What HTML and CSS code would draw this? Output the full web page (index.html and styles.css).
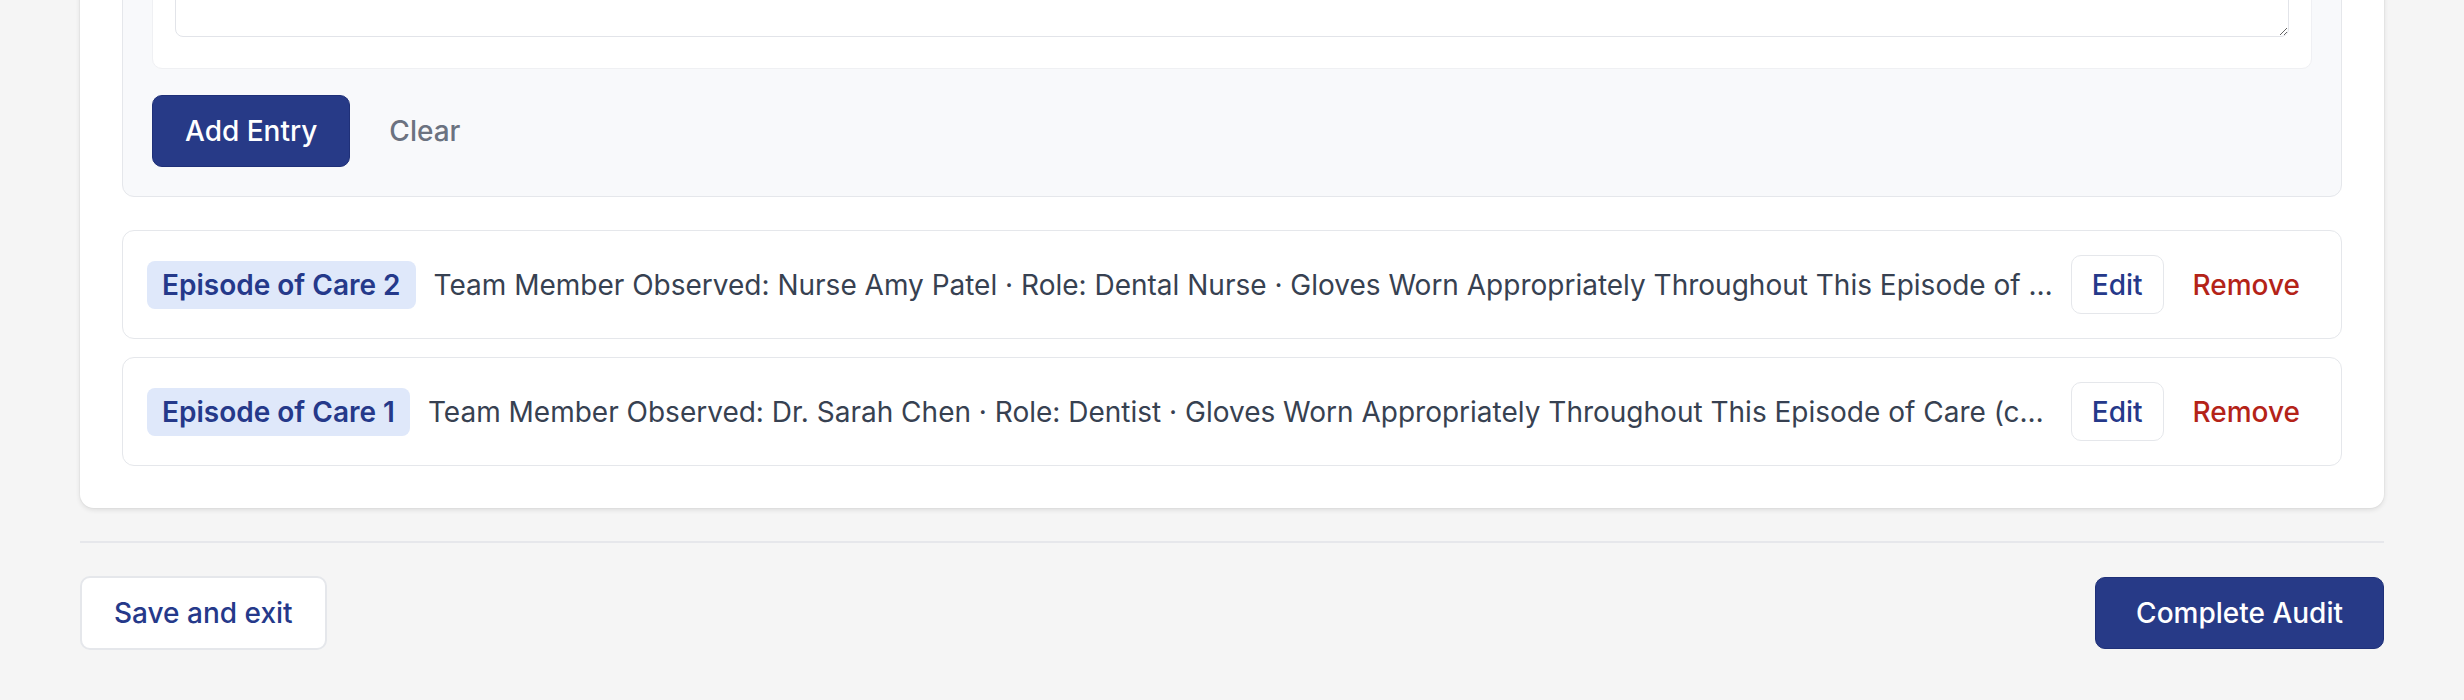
FILE: index.html
```html
<!DOCTYPE html>
<html lang="en">
<head>
<meta charset="utf-8">
<title>Audit – Episodes of Care</title>
<link rel="stylesheet" href="styles.css">
</head>
<body>
<main class="page">
  <section class="card">
    <div class="panel">
      <div class="field-box">
        <label class="field-label" for="notes">Notes</label>
        <textarea id="notes" class="textarea"></textarea>
      </div>
      <div class="form-actions">
        <button class="btn btn-primary" type="button">Add Entry</button>
        <button class="btn btn-link" type="button">Clear</button>
      </div>
    </div>

    <ul class="entries">
      <li class="entry">
        <span class="badge">Episode of Care 2</span>
        <span class="entry-text">Team Member Observed: Nurse Amy Patel · Role: Dental Nurse · Gloves Worn Appropriately Throughout This Episode of Care (changed between patients): Yes · Hand Hygiene Performed: Yes</span>
        <div class="entry-actions">
          <button class="btn btn-outline" type="button">Edit</button>
          <button class="btn btn-danger" type="button">Remove</button>
        </div>
      </li>
      <li class="entry">
        <span class="badge">Episode of Care 1</span>
        <span class="entry-text">Team Member Observed: Dr. Sarah Chen · Role: Dentist · Gloves Worn Appropriately Throughout This Episode of Care (changed between patients): Yes · Hand Hygiene Performed: Yes</span>
        <div class="entry-actions">
          <button class="btn btn-outline" type="button">Edit</button>
          <button class="btn btn-danger" type="button">Remove</button>
        </div>
      </li>
    </ul>
  </section>

  <footer class="footer">
    <button class="btn btn-secondary" type="button">Save and exit</button>
    <button class="btn btn-primary btn-large" type="button">Complete Audit</button>
  </footer>
</main>
</body>
</html>
```

FILE: styles.css
```css
* {
  box-sizing: border-box;
}

html, body {
  margin: 0;
  padding: 0;
}

body {
  background: #f5f5f5;
  font-family: Inter, "Noto Sans", "Liberation Sans", sans-serif;
  font-size: 28px;
  color: #374151;
}

.page {
  margin: -250px 80px 0;
  padding-bottom: 60px;
}

.card {
  background: #ffffff;
  border-radius: 14px;
  padding: 42px;
  box-shadow: 0 2px 5px rgba(0, 0, 0, 0.10), 0 0 0 1px rgba(0, 0, 0, 0.025);
}

.panel {
  background: #f8f9fb;
  border: 1.5px solid #e5e7eb;
  border-radius: 12px;
  padding: 29px;
}

.field-box {
  background: #ffffff;
  border: 1.5px solid #eff0f3;
  border-radius: 10px;
  padding: 22px 22px 31px;
}

.field-label {
  display: block;
  font-size: 22px;
  line-height: 30px;
  font-weight: 500;
  color: #374151;
  margin-bottom: 12px;
}

.textarea {
  display: block;
  width: 100%;
  height: 150px;
  border: 1.5px solid #e2e4e9;
  border-radius: 8px;
  background: #ffffff;
  font: inherit;
}

.form-actions {
  display: flex;
  align-items: center;
  gap: 18px;
  margin-top: 26px;
}

.btn {
  font-family: inherit;
  font-size: 28px;
  font-weight: 500;
  border-radius: 10px;
  cursor: pointer;
  display: inline-flex;
  align-items: center;
  justify-content: center;
  white-space: nowrap;
}

.btn-primary {
  height: 72px;
  padding: 0 32px;
  background: #273a87;
  border: 1.5px solid #1f3078;
  color: #ffffff;
}

.btn-large {
  padding: 0 40px;
}

.btn-link {
  height: 72px;
  padding: 0 21px;
  background: transparent;
  border: none;
  color: #6b7280;
}

.entries {
  list-style: none;
  margin: 33px 0 0;
  padding: 0;
  display: flex;
  flex-direction: column;
  gap: 18px;
}

.entry {
  display: flex;
  align-items: center;
  gap: 18px;
  padding: 24px;
  border: 1.5px solid #e5e7eb;
  border-radius: 12px;
  background: #ffffff;
}

.badge {
  flex: none;
  height: 48px;
  line-height: 48px;
  padding: 0 15px;
  border-radius: 8px;
  background: #dfe8fa;
  color: #25398a;
  font-weight: 600;
}

.entry-text {
  flex: 1;
  min-width: 0;
  overflow: hidden;
  white-space: nowrap;
  text-overflow: ellipsis;
  color: #374151;
}

.entry-actions {
  flex: none;
  display: flex;
  align-items: center;
  gap: 12px;
}

.btn-outline {
  height: 59px;
  padding: 0 20px;
  background: #ffffff;
  border: 1.5px solid #e5e7eb;
  color: #25398a;
}

.btn-danger {
  height: 59px;
  padding: 0 17px;
  background: transparent;
  border: none;
  color: #b42318;
}

.footer {
  margin-top: 33px;
  border-top: 2px solid #e6e7eb;
  padding-top: 33px;
  display: flex;
  justify-content: space-between;
  align-items: center;
}

.btn-secondary {
  height: 74px;
  padding: 0 32px;
  background: #ffffff;
  border: 2px solid #e5e7eb;
  color: #25398a;
}
```
